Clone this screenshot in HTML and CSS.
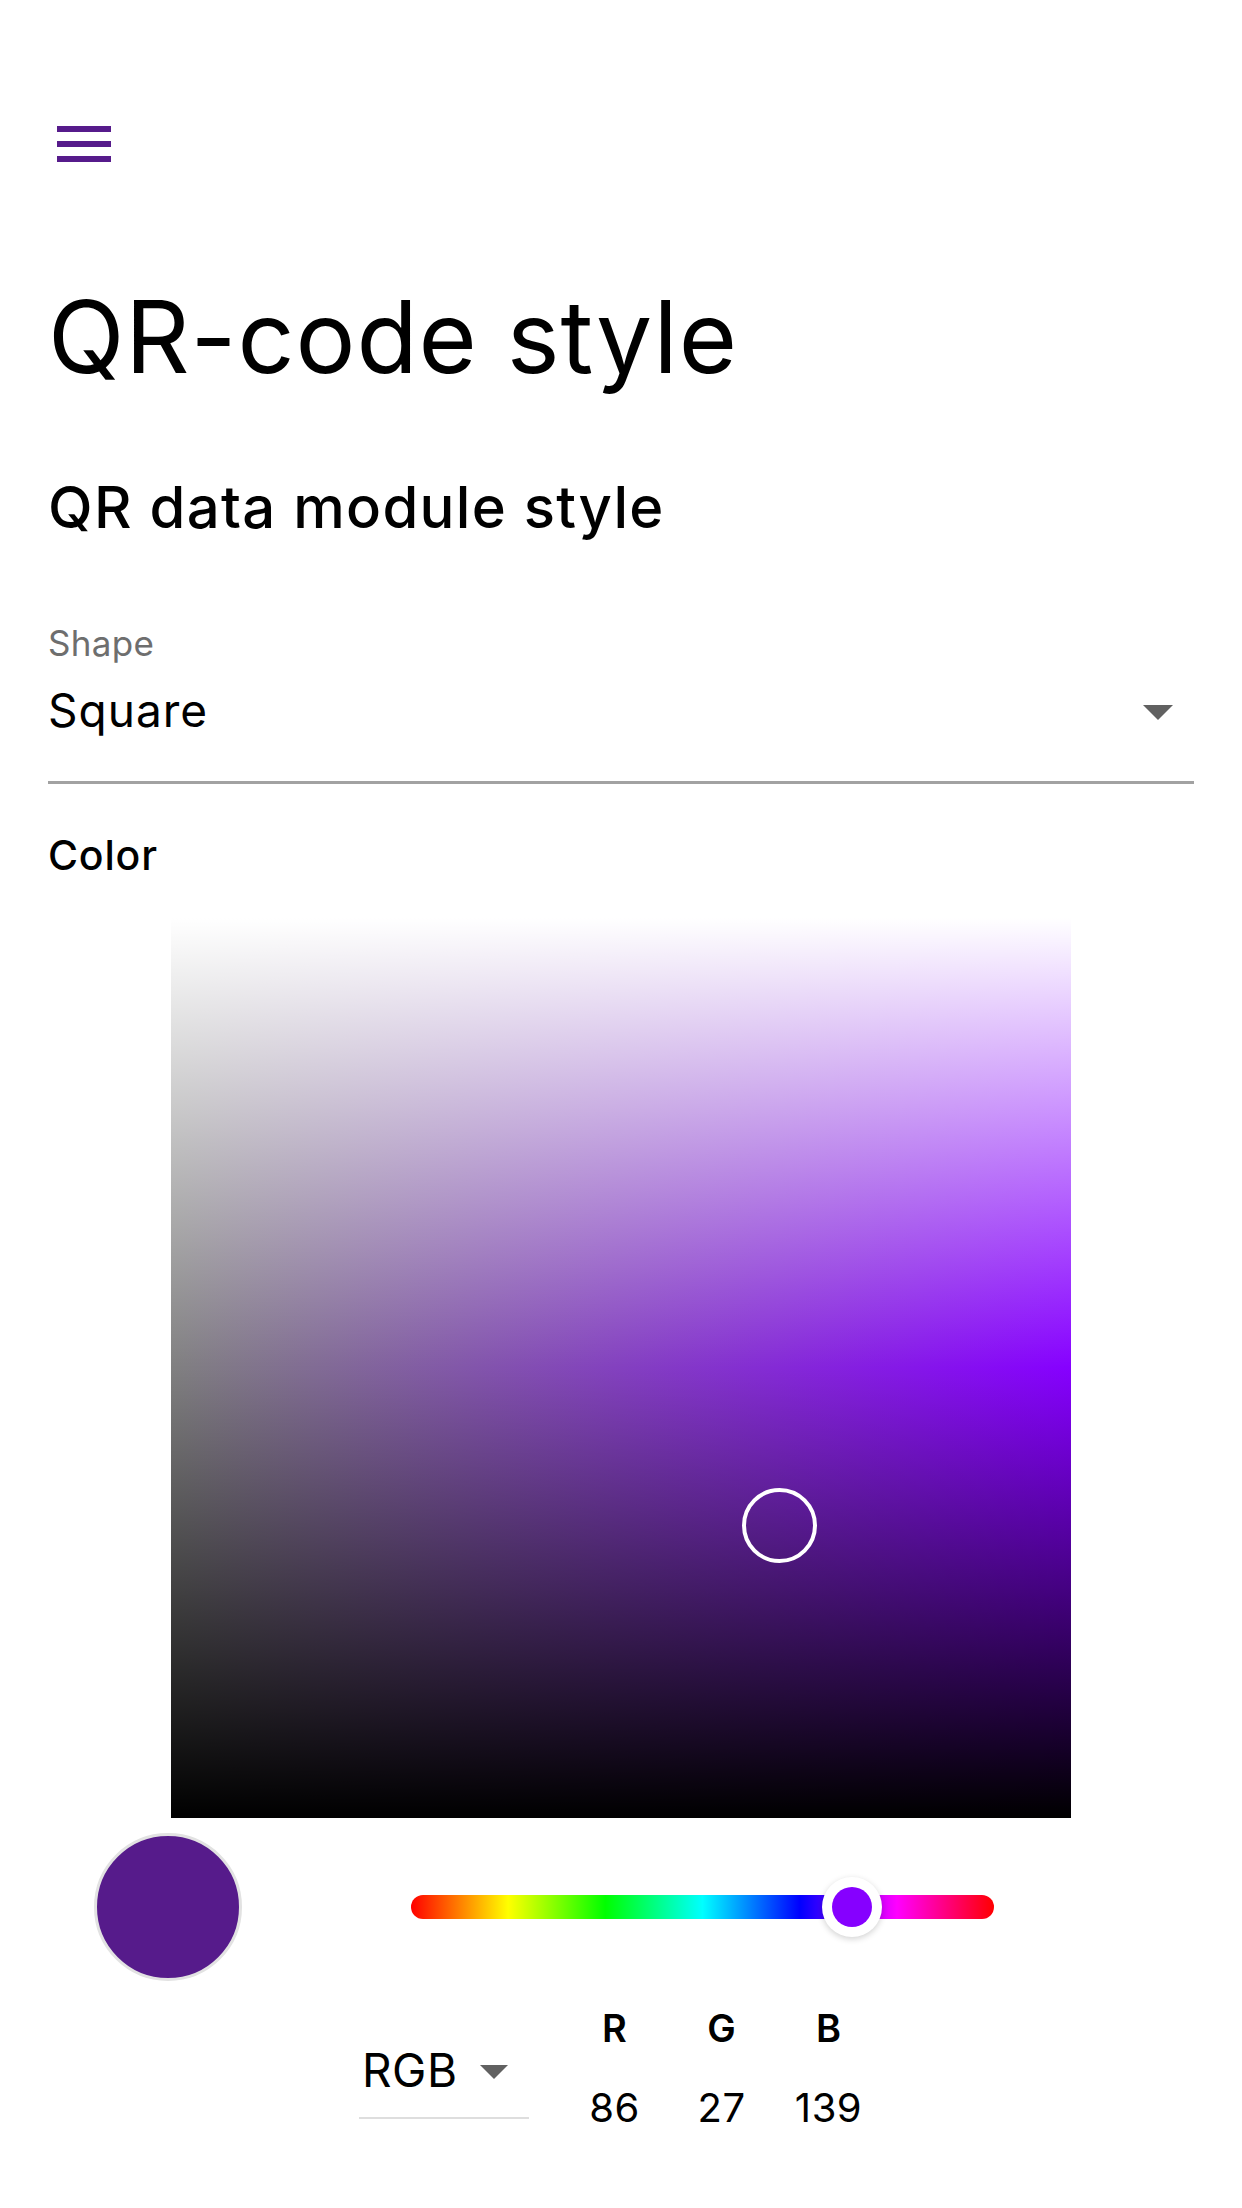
FILE: index.html
```html
<!DOCTYPE html>
<html>
<head>
<meta charset="utf-8">
<link rel="stylesheet" href="styles.css">
</head>
<body>
<header class="appbar">
  <svg class="menu-icon" viewBox="0 0 24 24" width="72" height="72"><path d="M3 18h18v-2H3v2zm0-5h18v-2H3v2zm0-7v2h18V6H3z" fill="#561b8b"/></svg>
</header>
<main class="content">
  <h1 class="title">QR-code style</h1>
  <h2 class="heading">QR data module style</h2>
  <div class="field">
    <div class="field-label">Shape</div>
    <div class="field-row">
      <span class="field-value">Square</span>
      <svg class="drop-arrow" viewBox="0 0 10 5" width="30" height="15"><path d="M0 0l5 5 5-5z" fill="#616161"/></svg>
    </div>
  </div>
  <div class="section-label">Color</div>
  <div class="picker">
    <div class="picker-cursor"></div>
  </div>
  <div class="controls">
    <div class="swatch"></div>
    <div class="hue-slider">
      <div class="hue-track"></div>
      <div class="hue-thumb"><div class="hue-thumb-inner"></div></div>
    </div>
  </div>
  <div class="inputs">
    <div class="mode-select">
      <span class="mode-value">RGB</span>
      <svg class="mode-arrow" viewBox="0 0 10 5" width="28" height="14"><path d="M0 0l5 5 5-5z" fill="#616161"/></svg>
    </div>
    <div class="channel">
      <div class="channel-label">R</div>
      <div class="channel-value">86</div>
    </div>
    <div class="channel">
      <div class="channel-label">G</div>
      <div class="channel-value">27</div>
    </div>
    <div class="channel">
      <div class="channel-label">B</div>
      <div class="channel-value">139</div>
    </div>
  </div>
</main>
</body>
</html>
```
FILE: styles.css
```css
* { box-sizing: border-box; }
html, body {
  margin: 0;
  padding: 0;
  background: #ffffff;
}
body {
  width: 1242px;
  min-height: 2208px;
  font-family: Inter, "Noto Sans", "Liberation Sans", sans-serif;
  color: #000;
}
.appbar {
  height: 228px;
  padding-top: 60px;
  padding-left: 48px;
  display: flex;
  align-items: center;
}
.menu-icon { display: block; }
.content {
  padding: 0 48px;
}
.title {
  margin: 49px 0 0 0;
  font-size: 100px;
  line-height: 120px;
  font-weight: 400;
  letter-spacing: 0.9px;
}
.heading {
  margin: 75px 0 0 0;
  font-size: 58px;
  line-height: 70px;
  font-weight: 500;
  letter-spacing: 1.3px;
}
.field {
  margin-top: 79px;
  border-bottom: 3px solid #a2a2a2;
  padding-bottom: 43px;
}
.field-label {
  font-size: 35px;
  line-height: 44px;
  color: #6e6e6e;
  letter-spacing: 0.3px;
}
.field-row {
  margin-top: 17px;
  height: 56px;
  display: flex;
  align-items: center;
  justify-content: space-between;
}
.field-value {
  font-size: 46px;
  line-height: 56px;
  letter-spacing: 1px;
}
.drop-arrow {
  display: block;
  margin-top: 4px;
  margin-right: 21px;
}
.section-label {
  margin-top: 46px;
  font-size: 41px;
  line-height: 50px;
  font-weight: 500;
  letter-spacing: 0.8px;
}
.picker {
  position: relative;
  width: 900px;
  height: 900px;
  margin: 38px auto 0 auto;
  background:
    linear-gradient(to bottom, #ffffff 0%, rgba(255,255,255,0) 50%, rgba(0,0,0,0) 50%, #000000 100%),
    linear-gradient(to right, #808080 0%, #8600ff 100%);
}
.picker-cursor {
  position: absolute;
  left: 571px;
  top: 570px;
  width: 75px;
  height: 75px;
  border: 4px solid #ffffff;
  border-radius: 50%;
}
.controls {
  margin-top: 15px;
  padding-left: 46px;
  height: 148px;
  display: flex;
  align-items: center;
}
.swatch {
  width: 148px;
  height: 148px;
  border-radius: 50%;
  background: #561b8b;
  border: 3px solid #e2e2e2;
  flex: none;
}
.hue-slider {
  position: relative;
  margin-left: 169px;
  width: 583px;
  height: 60px;
  display: flex;
  align-items: center;
}
.hue-track {
  width: 100%;
  height: 24px;
  border-radius: 12px;
  background: linear-gradient(to right, #ff0000 0%, #ffff00 16.667%, #00ff00 33.333%, #00ffff 50%, #0000ff 66.667%, #ff00ff 83.333%, #ff0000 100%);
}
.hue-thumb {
  position: absolute;
  left: 411px;
  top: 0;
  width: 60px;
  height: 60px;
  border-radius: 50%;
  background: #ffffff;
  box-shadow: 0 2px 6px rgba(0,0,0,0.18);
  display: flex;
  align-items: center;
  justify-content: center;
}
.hue-thumb-inner {
  width: 40px;
  height: 40px;
  border-radius: 50%;
  background: #8600ff;
}
.inputs {
  margin-top: 24px;
  padding-left: 311px;
  display: flex;
  align-items: flex-start;
}
.mode-select {
  margin-top: 37px;
  width: 170px;
  padding-left: 3px;
  padding-bottom: 19px;
  border-bottom: 2px solid #dedede;
  display: flex;
  align-items: center;
}
.mode-value {
  font-size: 46px;
  line-height: 56px;
  letter-spacing: 0.5px;
}
.mode-arrow {
  display: block;
  margin-left: 22px;
  margin-top: 4px;
}
.channel {
  width: 107px;
  text-align: center;
}
.mode-select + .channel { margin-left: 32px; }
.channel-label {
  font-size: 38px;
  line-height: 46px;
  font-weight: 600;
}
.channel-value {
  margin-top: 33px;
  font-size: 40px;
  line-height: 48px;
  letter-spacing: 0.5px;
}
```
